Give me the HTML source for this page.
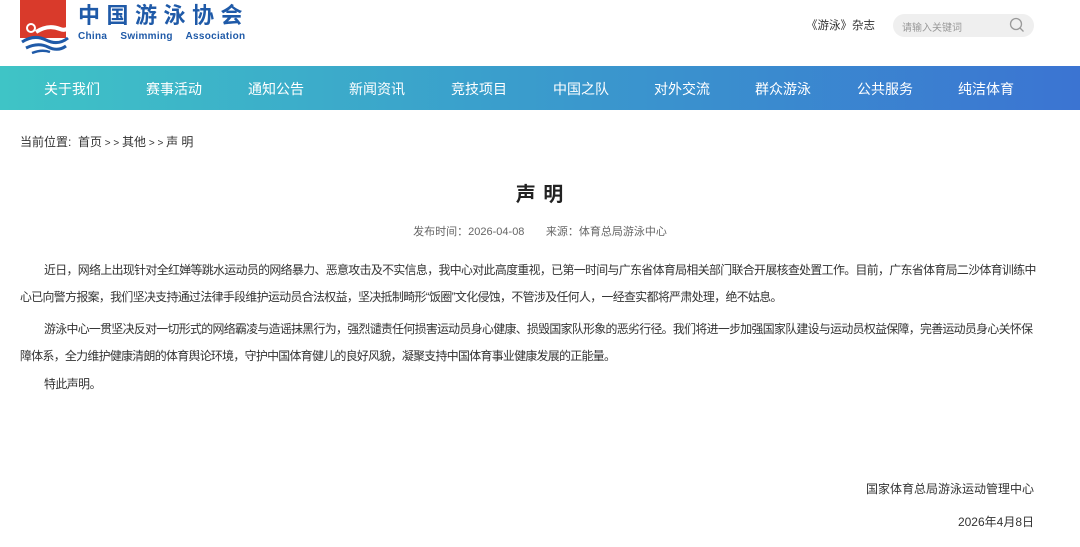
<!DOCTYPE html>
<html><head><meta charset="utf-8"><style>
*{margin:0;padding:0;box-sizing:border-box}
body{width:1080px;height:547px;background:#fff;font-family:"Liberation Sans","Noto Sans CJK SC",sans-serif;color:#333;position:relative;overflow:hidden}
.abs{position:absolute}
.nav{top:66px;left:0;width:1080px;height:44px;background:linear-gradient(90deg,#3fc4c6,#3a9fcc 45%,#3b74d2)}
.nav span{position:absolute;top:13px;color:#fff;font-size:14px;white-space:nowrap}
p.t{position:absolute;left:20px;width:1055px;font-size:11.9px;line-height:27px;text-indent:24px;letter-spacing:-0.5px;color:#333;white-space:nowrap}
.g{font-size:10px}
</style></head><body>
<div class="abs" style="left:20px;top:0;width:46px;height:38px;background:#d93a2b"></div>
<svg class="abs" style="left:20px;top:20px" width="50" height="36" viewBox="0 0 50 36">
<circle cx="11" cy="8" r="4" fill="#d93a2b" stroke="#fff" stroke-width="2"/>
<path d="M16 12 Q28 4 40 9 Q45 11 48 8" stroke="#fff" stroke-width="4" fill="none"/>
<path d="M2 22 Q14 14 26 20 Q38 26 48 18" stroke="#1f5aa8" stroke-width="3" fill="none"/>
<path d="M6 28 Q18 22 28 27 Q38 32 46 26" stroke="#1f5aa8" stroke-width="3" fill="none"/>
<path d="M12 33 Q22 29 30 32" stroke="#1f5aa8" stroke-width="2.5" fill="none"/>
</svg>
<div class="abs" style="left:78px;top:2px;font-size:22px;line-height:28px;font-weight:bold;color:#1f5aa8;letter-spacing:6.5px;white-space:nowrap">中国游泳协会</div>
<div class="abs" style="left:78px;top:31px;font-size:10px;font-weight:bold;color:#1f5aa8;letter-spacing:0.3px;word-spacing:10px;white-space:nowrap">China Swimming Association</div>
<div class="abs" style="left:806px;top:17px;font-size:11.5px;color:#333">《游泳》杂志</div>
<div class="abs" style="left:893px;top:14px;width:141px;height:23px;border-radius:12px;background:#efefef"></div>
<div class="abs" style="left:902px;top:19px;font-size:10px;color:#999">请输入关键词</div>
<svg class="abs" style="left:1009px;top:17px" width="16" height="16" viewBox="0 0 16 16"><circle cx="7" cy="7" r="5.5" stroke="#999" stroke-width="1.3" fill="none"/><path d="M11 11l3.5 3.5" stroke="#999" stroke-width="1.3"/></svg>
<div class="abs nav">
<span style="left:44px">关于我们</span><span style="left:146px">赛事活动</span><span style="left:248px">通知公告</span><span style="left:349px">新闻资讯</span><span style="left:451px">竞技项目</span><span style="left:553px">中国之队</span><span style="left:654px">对外交流</span><span style="left:755px">群众游泳</span><span style="left:857px">公共服务</span><span style="left:958px">纯洁体育</span>
</div>
<div class="abs" style="left:20px;top:133px;font-size:12px;color:#333">当前位置:&nbsp; 首页<span class="g"> &gt; &gt; </span>其他<span class="g"> &gt; &gt; </span>声 明</div>
<div class="abs" style="left:0;width:1080px;top:178px;text-align:center;font-size:20px;font-weight:bold;color:#222;letter-spacing:1px">声 明</div>
<div class="abs" style="left:0;width:1080px;top:223px;text-align:center;font-size:11px;color:#666">发布时间：2026-04-08 &nbsp;&nbsp;&nbsp;&nbsp;&nbsp; 来源：体育总局游泳中心</div>
<p class="t" style="top:257px;letter-spacing:-0.62px">近日，网络上出现针对全红婵等跳水运动员的网络暴力、恶意攻击及不实信息，我中心对此高度重视，已第一时间与广东省体育局相关部门联合开展核查处置工作。目前，广东省体育局二沙体育训练中<br>心已向警方报案，我们坚决支持通过法律手段维护运动员合法权益，坚决抵制畸形“饭圈”文化侵蚀，不管涉及任何人，一经查实都将严肃处理，绝不姑息。</p>
<p class="t" style="top:316px;letter-spacing:-0.66px">游泳中心一贯坚决反对一切形式的网络霸凌与造谣抹黑行为，强烈谴责任何损害运动员身心健康、损毁国家队形象的恶劣行径。我们将进一步加强国家队建设与运动员权益保障，完善运动员身心关怀保<br>障体系，全力维护健康清朗的体育舆论环境，守护中国体育健儿的良好风貌，凝聚支持中国体育事业健康发展的正能量。</p>
<p class="t" style="top:371px">特此声明。</p>
<div class="abs" style="right:46px;top:480px;font-size:12px;color:#333">国家体育总局游泳运动管理中心</div>
<div class="abs" style="right:46px;top:513px;font-size:12px;color:#333">2026年4月8日</div>
</body></html>
